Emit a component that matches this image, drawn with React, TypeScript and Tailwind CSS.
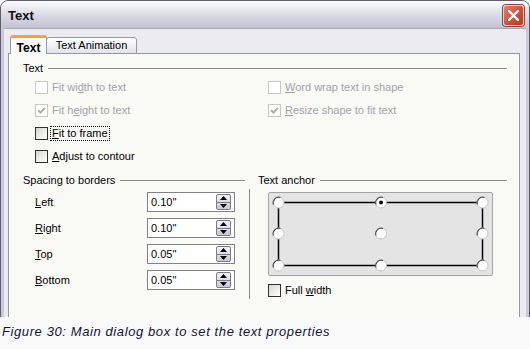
const checks = [
    { left: { label: <>Fit wi<u>d</u>th to text</>, checked: false, disabled: true }, right: { label: <><u>W</u>ord wrap text in shape</>, checked: false, disabled: true } },
    { left: { label: <>Fit h<u>e</u>ight to text</>, checked: true, disabled: true }, right: { label: <><u>R</u>esize shape to fit text</>, checked: true, disabled: true } },
    { left: { label: <><u>F</u>it to frame</>, checked: false, disabled: false, focus: true }, right: null },
    { left: { label: <><u>A</u>djust to contour</>, checked: false, disabled: false }, right: null },
];

const spacing = [
    { label: <><u>L</u>eft</>, value: '0.10"' },
    { label: <><u>R</u>ight</>, value: '0.10"' },
    { label: <><u>T</u>op</>, value: '0.05"' },
    { label: <><u>B</u>ottom</>, value: '0.05"' },
];

function Check({ checked = false, disabled = false }: { checked?: boolean; disabled?: boolean }) {
    return (
        <span
            className={`flex h-[13px] w-[13px] shrink-0 items-center justify-center border ${
                disabled ? "border-[#c8c8c0] bg-white" : "border-[#303030] bg-linear-to-br from-[#d6d6d0] to-white"
            }`}
        >
            {checked && (
                <svg width="9" height="9" viewBox="0 0 9 9">
                    <path d="M1 4.2 L3.4 6.6 L8 1.8" fill="none" stroke="#a9a9a2" strokeWidth="1.8" />
                </svg>
            )}
        </span>
    );
}

function Header({ title }: { title: string }) {
    return (
        <div className="flex h-[16px] items-center gap-[5px]">
            <span>{title}</span>
            <span className="h-px flex-1 bg-[#8a8a8a]" />
        </div>
    );
}

function Spinner() {
    return (
        <div className="flex h-[16px] w-[15px] flex-col rounded-[2px] border border-[#7c7c88] bg-linear-to-b from-[#f2f2f6] to-[#c8c8d3]">
            <div className="flex flex-1 items-center justify-center border-b border-[#7c7c88]">
                <svg width="7" height="4" viewBox="0 0 7 4">
                    <path d="M0 4 L3.5 0 L7 4 Z" fill="#000" />
                </svg>
            </div>
            <div className="flex flex-1 items-center justify-center">
                <svg width="7" height="4" viewBox="0 0 7 4">
                    <path d="M0 0 L3.5 4 L7 0 Z" fill="#000" />
                </svg>
            </div>
        </div>
    );
}

function Radio({ x, y, selected = false }: { x: number; y: number; selected?: boolean }) {
    return (
        <g>
            <circle cx={x} cy={y} r="5.5" fill="#fff" stroke="#c4c4c4" strokeWidth="1" />
            <path d={`M${x - 5} ${y + 2} A5.5 5.5 0 0 1 ${x + 2} ${y - 5}`} fill="none" stroke="#505050" strokeWidth="1.2" />
            {selected && <circle cx={x} cy={y} r="2" fill="#000" />}
        </g>
    );
}

function AnchorBox() {
    const xs = [10.5, 113, 214.5];
    const ys = [10.5, 41.5, 73.5];
    return (
        <div className="ml-[10px] mt-[4px] h-[84px] w-[225px] rounded-[2px] border border-[#a4a4a4] bg-[#e4e4e4]">
            <svg width="223" height="82" viewBox="1 1 223 82">
                <rect x={xs[0]} y={ys[0]} width={xs[2] - xs[0]} height={ys[2] - ys[0]} fill="none" stroke="#000" strokeWidth="1.5" />
                {ys.map((y) => xs.map((x) => <Radio key={`${x}-${y}`} x={x} y={y} selected={x === 113 && y === 10.5} />))}
            </svg>
        </div>
    );
}

export default function App() {
    return (
        <div className="h-[349px] w-[530px] overflow-hidden bg-[#f9f9f9] font-['Liberation_Sans',Arial,sans-serif] text-[11px] text-black">
            <div className="h-[317px] overflow-hidden">
                <div className="flex h-[360px] flex-col rounded-t-[8px] border border-[#5e5e6e] bg-[#c9c9d8]">
                    <div className="flex h-[27px] shrink-0 items-center justify-between rounded-t-[7px] bg-linear-to-b from-[#fbfbfd] via-[#dcdce7] to-[#c2c2d2] pl-[7px] pr-[5px] pt-[2px]">
                        <span className="text-[13px] font-bold text-[#101010]">Text</span>
                        <div className="flex h-[21px] w-[21px] items-center justify-center rounded-[3px] border border-[#f4d0c8] bg-linear-to-br from-[#e9816a] via-[#d4553a] to-[#b83520] shadow-[0_0_0_1px_#8a4a40]">
                            <svg width="11" height="11" viewBox="0 0 11 11">
                                <path d="M1 1 L10 10 M10 1 L1 10" stroke="#fff" strokeWidth="2.4" strokeLinecap="round" />
                            </svg>
                        </div>
                    </div>
                    <div className="mx-[3px] flex flex-1 flex-col border-t border-[#a9a9ba] bg-[#ececf0] pl-[4px] pr-[6px] pt-[6px]">
                        <div className="-mb-px flex items-end pl-[2px]">
                            <div className="relative z-10 flex h-[19px] w-[37px] items-start justify-center rounded-t-[3px] border-x border-t-[3px] border-x-[#919b9c] border-t-[#f0a832] bg-[#fafaf7] pt-[1px]">
                                <span className="text-[12px] font-bold">Text</span>
                            </div>
                            <div className="-ml-px flex h-[17px] w-[91px] items-center justify-center rounded-t-[3px] border border-[#919b9c] bg-linear-to-b from-white to-[#e2e2ea]">
                                <span>Text Animation</span>
                            </div>
                        </div>
                        <div className="flex-1 border border-[#919b9c] bg-[#f9f9f6] pl-[14px] pr-[12px] pt-[6px]">
                            <Header title="Text" />
                            <div className="ml-[12px]">
                                {checks.map((row, i) => (
                                    <div key={i} className="grid h-[23px] grid-cols-[233px_1fr] items-center">
                                        <div className={`flex items-center gap-[4px] ${row.left.disabled ? "text-[#a2a2aa]" : ""}`}>
                                            <Check checked={row.left.checked} disabled={row.left.disabled} />
                                            <span className={row.left.focus ? "px-px leading-[13px] outline-1 outline-dotted outline-black -ml-px" : ""}>
                                                {row.left.label}
                                            </span>
                                        </div>
                                        {row.right && (
                                            <div className="flex items-center gap-[4px] text-[#a2a2aa]">
                                                <Check checked={row.right.checked} disabled={row.right.disabled} />
                                                <span>{row.right.label}</span>
                                            </div>
                                        )}
                                    </div>
                                ))}
                            </div>
                            <div className="mt-[4px] flex">
                                <div className="w-[227px]">
                                    <div className="pr-[5px]">
                                        <Header title="Spacing to borders" />
                                    </div>
                                    <div className="mt-px h-[110px] border-r border-[#8a8a8a]">
                                        {spacing.map((s, i) => (
                                            <div key={i} className="flex h-[26px] items-center pl-[12px]">
                                                <span className="w-[112px]">{s.label}</span>
                                                <div className="flex h-[20px] w-[88px] items-center justify-between border border-[#82828c] bg-white pl-[3px] pr-[3px]">
                                                    <span>{s.value}</span>
                                                    <Spinner />
                                                </div>
                                            </div>
                                        ))}
                                    </div>
                                </div>
                                <div className="flex-1 pl-[8px]">
                                    <Header title="Text anchor" />
                                    <AnchorBox />
                                    <div className="ml-[10px] mt-[5px] flex h-[18px] items-center gap-[4px]">
                                        <Check />
                                        <span>
                                            Full <u>w</u>idth
                                        </span>
                                    </div>
                                </div>
                            </div>
                        </div>
                    </div>
                </div>
            </div>
            <div className="flex h-[32px] items-center pb-[2px] pl-[2px]">
                <span className="text-[13px] italic tracking-[0.6px] text-[#14143a]">
                    Figure 30: Main dialog box to set the text properties
                </span>
            </div>
        </div>
    );
}
